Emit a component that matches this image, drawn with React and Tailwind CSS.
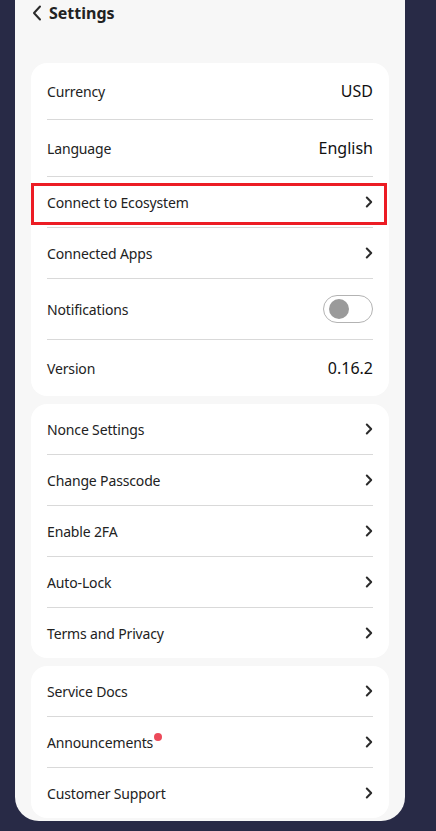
import React from "react";

const Chevron = () => (
  <svg width="8" height="12" viewBox="0 0 8 12" fill="none" className="shrink-0">
    <path d="M1.8 1.5 L6.2 6 L1.8 10.5" stroke="#2b2b2b" strokeWidth="2" strokeLinecap="round" strokeLinejoin="round" />
  </svg>
);

const Divider = () => <div className="h-px bg-[#d9d9d9]" />;

const Row = ({ label, h = "h-[50px]", right, dot, highlight }) => (
  <div className={`relative flex items-center justify-between ${h}`}>
    <span className="relative text-[14px] tracking-[-0.15px] text-[#222]">
      {label}
      {dot && <span className="absolute -right-[9px] top-[1px] h-[8px] w-[8px] rounded-full bg-[#ec4a5a]" />}
    </span>
    {right ?? <Chevron />}
    {highlight && (
      <div className="pointer-events-none absolute -left-4 -right-[14px] top-[6px] bottom-[2px] border-[3px] border-[#ec1c24]" />
    )}
  </div>
);

const Toggle = () => (
  <div className="flex h-[28px] w-[50px] items-center rounded-full border border-[#b3b3b3] bg-white pl-[5px]">
    <div className="h-[20px] w-[20px] rounded-full bg-[#9a9a9a]" />
  </div>
);

const Card = ({ children }) => <div className="rounded-[16px] bg-white px-4">{children}</div>;

export default function App() {
  return (
    <div className="min-h-[831px] bg-[#282a46] pl-[15px]" style={{ fontFamily: '"Noto Sans", "Noto Sans CJK KR", sans-serif' }}>
      <div className="w-[390px] rounded-b-[24px] bg-[#f7f7f7] px-4 pb-[3px]">
        <div className="flex h-[25px] items-center gap-[7px] pl-[1px]">
          <svg width="10" height="16" viewBox="0 0 10 16" fill="none">
            <path d="M8 1.5 L2 8 L8 14.5" stroke="#2b2b2b" strokeWidth="2" strokeLinecap="round" strokeLinejoin="round" />
          </svg>
          <span className="text-[16px] font-bold text-[#222]">Settings</span>
        </div>
        <div className="h-[38px]" />
        <div className="flex flex-col gap-2">
          <Card>
            <Row label="Currency" h="h-[56px]" right={<span className="text-[16px] text-[#111]">USD</span>} />
            <Divider />
            <Row label="Language" h="h-[56px]" right={<span className="text-[16px] text-[#111]">English</span>} />
            <Divider />
            <Row label="Connect to Ecosystem" highlight />
            <Divider />
            <Row label="Connected Apps" />
            <Divider />
            <Row label="Notifications" h="h-[60px]" right={<Toggle />} />
            <Divider />
            <Row label="Version" h="h-[56px]" right={<span className="text-[16px] text-[#111]">0.16.2</span>} />
          </Card>
          <Card>
            <Row label="Nonce Settings" />
            <Divider />
            <Row label="Change Passcode" />
            <Divider />
            <Row label="Enable 2FA" />
            <Divider />
            <Row label="Auto-Lock" />
            <Divider />
            <Row label="Terms and Privacy" />
          </Card>
          <Card>
            <Row label="Service Docs" />
            <Divider />
            <Row label="Announcements" dot />
            <Divider />
            <Row label="Customer Support" />
          </Card>
        </div>
      </div>
    </div>
  );
}
